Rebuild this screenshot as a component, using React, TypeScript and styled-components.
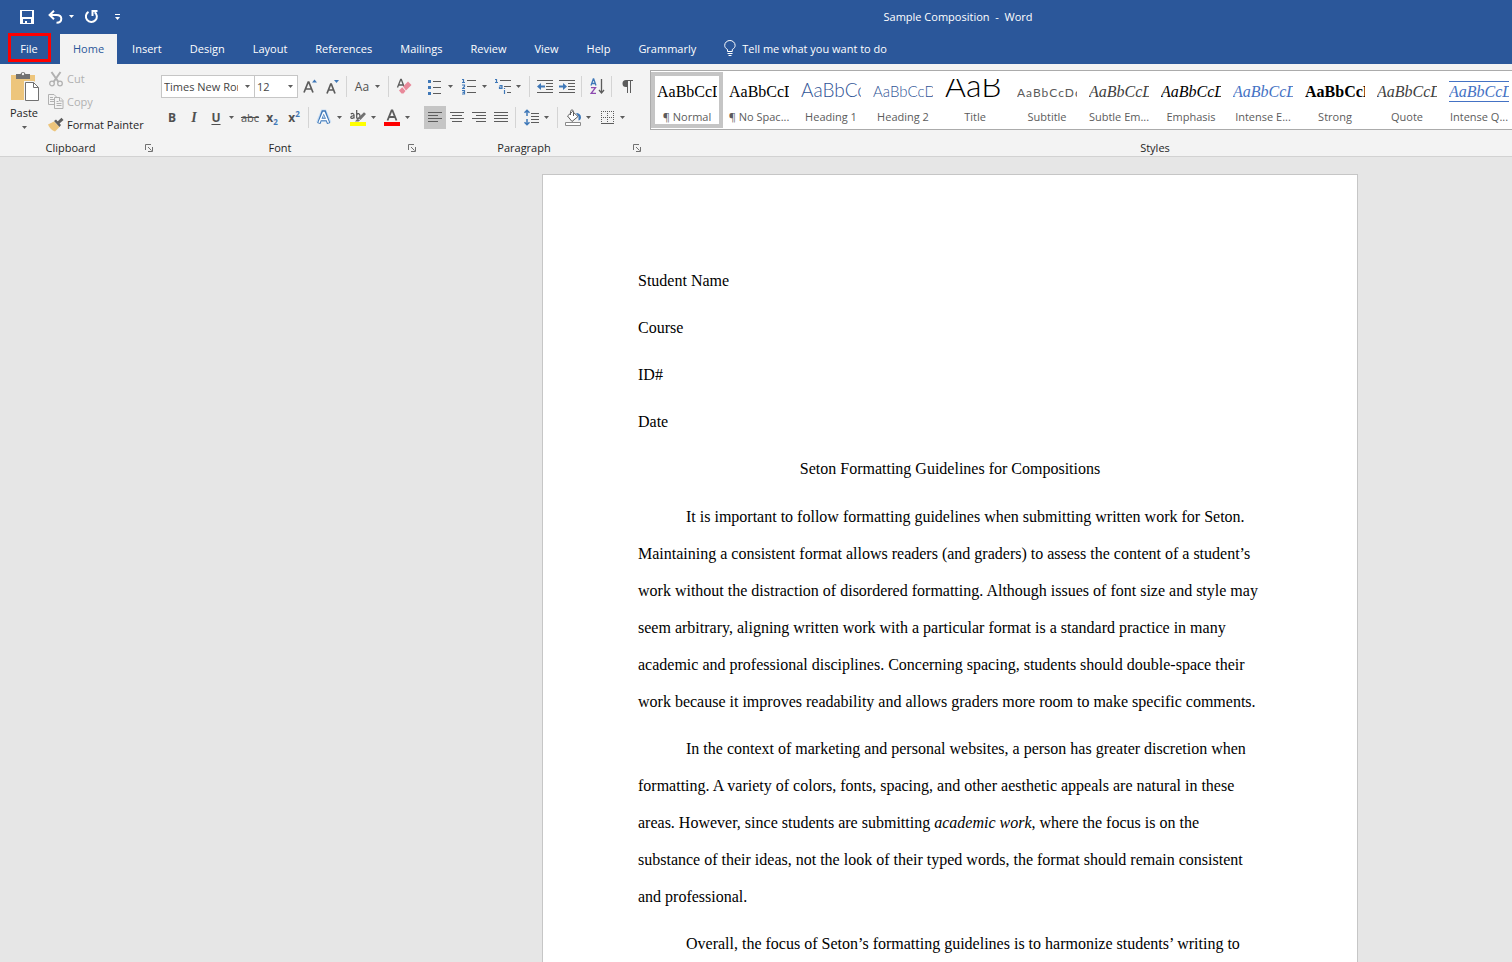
import React from "react";
import styled, { createGlobalStyle, css } from "styled-components";

const blue = "#2b579a";
const accent = "#3f78b8";
const ink = "#5c5c5c";

const GlobalStyle = createGlobalStyle`
  *, *::before, *::after { box-sizing: border-box; }
  body {
    margin: 0;
    font-family: "Open Sans", "Noto Sans", sans-serif;
    font-size: 11px;
    color: #262626;
  }
  button, select {
    font: inherit;
    color: inherit;
    border: 0;
    padding: 0;
    margin: 0;
    background: none;
  }
  svg { display: block; flex: none; }
`;

const Window = styled.div`
  display: flex;
  flex-direction: column;
  height: 100vh;
  overflow: hidden;
  background: #e6e6e6;
`;

const TitleBar = styled.header`
  display: flex;
  align-items: center;
  flex: none;
  height: 34px;
  padding-bottom: 1px;
  background: ${blue};
  color: #fff;
`;

const QuickAccess = styled.div`
  display: flex;
  align-items: center;
  gap: 6px;
  width: 130px;
  padding-left: 20px;
`;

const QuickButton = styled.button<{ $width?: number }>`
  display: flex;
  align-items: center;
  justify-content: center;
  width: ${(p) => p.$width ?? 16}px;
  height: 18px;
`;

const UndoGroup = styled.div`
  display: flex;
  align-items: center;
  margin-left: 6px;
`;

const WindowTitle = styled.h1`
  flex: 1;
  margin: 0;
  padding: 0 0 1px 274px;
  text-align: center;
  font-size: 11px;
  font-weight: 400;
  white-space: pre;
`;

const TabBar = styled.nav`
  display: flex;
  flex: none;
  gap: 2px;
  height: 30px;
  background: ${blue};
`;

const Tab = styled.button<{ $active?: boolean }>`
  padding: 0 13px 2px;
  white-space: nowrap;
  color: ${(p) => (p.$active ? blue : "#fff")};
  background: ${(p) => (p.$active ? "#f3f3f3" : "transparent")};
`;

const FileTab = styled(Tab)`
  position: relative;
  width: 58px;
  &::after {
    content: "";
    position: absolute;
    left: 8px;
    right: 7px;
    top: -1px;
    bottom: 2px;
    border: 3px solid #fe0000;
  }
`;

const TellMe = styled(Tab)`
  display: flex;
  align-items: center;
  gap: 6px;
`;

const Ribbon = styled.section`
  display: flex;
  flex: none;
  height: 93px;
  background: #f3f3f3;
  border-bottom: 1px solid #d2d2d2;
`;

const Group = styled.div<{ $width?: number }>`
  position: relative;
  display: flex;
  flex-direction: column;
  justify-content: space-between;
  ${(p) =>
    p.$width
      ? css`
          flex: none;
          width: ${p.$width}px;
        `
      : css`
          flex: 1;
          min-width: 0;
        `}
  & + &::before {
    content: "";
    position: absolute;
    left: 0;
    top: 4px;
    bottom: 4px;
    width: 1px;
    background: #d4d4d4;
  }
`;

const GroupFooter = styled.div<{ $shift?: number }>`
  display: flex;
  align-items: center;
  height: 17px;
  padding: 0 3px 0 ${(p) => p.$shift ?? 0}px;
`;

const GroupName = styled.span`
  flex: 1;
  margin-right: 4px;
  text-align: center;
`;

const ClipboardBody = styled.div`
  display: flex;
  padding: 3px 0 0 4px;
`;

const PasteButton = styled.button`
  display: flex;
  flex-direction: column;
  align-items: center;
  width: 40px;
  padding-top: 4px;
`;

const PasteLabel = styled.span`
  margin: 2px 0 5px;
  line-height: 17px;
`;

const CommandList = styled.div`
  display: flex;
  flex-direction: column;
  padding-left: 4px;
`;

const Command = styled.button`
  display: flex;
  align-items: center;
  gap: 3px;
  height: 23px;
  white-space: nowrap;
  &:disabled { color: #b1b1b1; }
`;

const ToolRows = styled.div`
  display: flex;
  flex-direction: column;
  gap: 8px;
  padding: 11px 0 0 5px;
`;

const ToolRow = styled.div`
  display: flex;
  height: 23px;
`;

const Tool = styled.button<{ $on?: boolean }>`
  display: flex;
  align-items: center;
  justify-content: center;
  flex: none;
  width: 22px;
  color: #505050;
  background: ${(p) => (p.$on ? "#c5c5c5" : "transparent")};
`;

const Glyph = styled.span<{ $look?: "bold" | "italic" | "underline" | "strike" }>`
  font-size: 12px;
  line-height: 16px;
  font-weight: ${(p) => (p.$look === "strike" ? 400 : 700)};
  ${(p) => p.$look === "italic" && css`font-family: "Liberation Serif", serif; font-size: 14px; font-style: italic;`}
  ${(p) => p.$look === "underline" && css`text-decoration: underline; text-underline-offset: 2px;`}
  ${(p) => p.$look === "strike" && css`font-size: 11px; text-decoration: line-through;`}
`;

const ScriptMark = styled.span<{ $raised?: boolean }>`
  align-self: ${(p) => (p.$raised ? "flex-start" : "flex-end")};
  margin: 3px 0 2px;
  font-size: 8px;
  line-height: 10px;
  font-weight: 700;
  color: ${accent};
`;

const CaseLabel = styled.span`
  font-size: 12px;
`;

const DropButton = styled.button`
  display: flex;
  align-items: center;
  flex: none;
  width: 12px;
  padding-left: 2px;
`;

const Divider = styled.span`
  flex: none;
  width: 1px;
  margin: 1px 4px 1px 3px;
  background: #d4d4d4;
`;

const Combo = styled.label<{ $width: number }>`
  position: relative;
  display: flex;
  flex: none;
  width: ${(p) => p.$width}px;
  & + & {
    margin: 0 1px 0 -1px;
  }
  svg {
    position: absolute;
    right: 5px;
    top: 10px;
    pointer-events: none;
  }
`;

const ComboSelect = styled.select`
  appearance: none;
  width: 100%;
  padding: 0 16px 0 2px;
  border: 1px solid #c6c6c6;
  border-radius: 0;
  background: #fff;
  color: #444;
`;

const Gallery = styled.div`
  display: flex;
  height: 60px;
  margin: 6px 0 0 6px;
  padding: 1px 0;
  border: 1px solid #ababab;
  border-right: 0;
  background: #fff;
  overflow: hidden;
`;

const StyleCell = styled.button<{ $selected?: boolean }>`
  display: flex;
  flex-direction: column;
  align-items: center;
  flex: none;
  width: 72px;
  border: 4px solid ${(p) => (p.$selected ? "#c5c5c5" : "transparent")};
  color: #5c5c5c;
`;

type Look = {
  font?: "serif" | "light";
  size?: number;
  color?: string;
  italic?: boolean;
  bold?: boolean;
  regular?: boolean;
  spaced?: boolean;
  ruled?: boolean;
};

const weightOf = (look: Look) => {
  if (look.bold) return 700;
  return look.font === "light" && !look.regular ? 300 : 400;
};

/* The empty ::before block sets one shared baseline for samples of every size. */
const Preview = styled.span<{ $look: Look }>`
  display: flex;
  align-items: baseline;
  width: 60px;
  height: 22px;
  margin: 3px 0 9px;
  overflow: hidden;
  white-space: nowrap;
  line-height: 0;
  font-family: ${(p) => (p.$look.font === "light" ? `Lato, sans-serif` : `"Liberation Serif", serif`)};
  font-weight: ${(p) => weightOf(p.$look)};
  font-size: ${(p) => p.$look.size ?? 16}px;
  font-style: ${(p) => (p.$look.italic ? "italic" : "normal")};
  color: ${(p) => p.$look.color ?? "#000"};
  letter-spacing: ${(p) => (p.$look.spaced ? "1px" : "normal")};
  &::before {
    content: "";
    height: 18px;
  }
  ${(p) =>
    p.$look.ruled &&
    css`
      height: 21px;
      margin: 5px 0 8px;
      border-top: 1px solid #4472c4;
      border-bottom: 1px solid #4472c4;
      &::before { height: 15px; }
    `}
`;

const StyleName = styled.span`
  line-height: 14px;
  white-space: nowrap;
`;

const Workspace = styled.main`
  flex: 1;
  min-height: 0;
  overflow: hidden;
  padding: 17px 154px 0 0;
`;

const Sheet = styled.article`
  width: 816px;
  min-height: 1056px;
  margin-left: auto;
  padding: 87px 95px;
  border: 1px solid #c6c6c6;
  background: #fff;
  color: #000;
  font-family: "Liberation Serif", serif;
  font-size: 16px;
  line-height: 37px;
`;

const HeadLine = styled.p`
  margin: 0 0 10px;
`;

const DocTitle = styled.h2`
  margin: 0 0 11px;
  text-align: center;
  font-size: 16px;
  font-weight: 400;
`;

const Paragraph = styled.p`
  margin: 0 0 10px;
  text-indent: 48px;
`;

const Arrow = ({ color = "#5c5c5c" }: { color?: string }) => (
  <svg width="5" height="3" viewBox="0 0 5 3">
    <path d="M0 0h5L2.5 3z" fill={color} />
  </svg>
);

const Drop = ({ label }: { label: string }) => (
  <DropButton aria-label={label}>
    <Arrow />
  </DropButton>
);

const SaveIcon = () => (
  <svg width="14" height="14" viewBox="0 0 14 14">
    <path d="M0 0h14v14H0zM2 1v6h10V1zM3 9v4h2v-2h2v2h4V9z" fill="#fff" fillRule="evenodd" />
  </svg>
);

const UndoIcon = () => (
  <svg width="15" height="14" viewBox="0 0 15 14" fill="none" stroke="#fff" strokeWidth="2">
    <path d="M6 .8 1.6 5 6 9.2M2 5h6.5c3 0 4.800 1.500 4.800 3.800S11.500 12.800 8.500 12.800" />
  </svg>
);

const RedoIcon = () => (
  <svg width="15" height="15" viewBox="0 0 15 15" fill="none" stroke="#fff" strokeWidth="2">
    <path d="M4.500 2.800a5.500 5.500 0 1 0 6.200.3" />
    <path d="M8.500 7V2h5" />
  </svg>
);

const CustomizeIcon = () => (
  <svg width="5" height="6" viewBox="0 0 5 6" fill="#fff">
    <path d="M0 0h5v1H0zM0 3h5L2.500 6z" />
  </svg>
);

const BulbIcon = () => (
  <svg width="12" height="16" viewBox="0 0 12 16" fill="none" stroke="#fff">
    <path d="M3.500 11.500v-2C1.500 8.300.7 7 .7 5.400a5.200 4.900 0 0 1 10.400 0c0 1.600-.8 2.900-2.800 4.100v2zM3.500 13.500h5M4.500 15.500h3" />
  </svg>
);

const PasteIcon = () => (
  <svg width="29" height="31" viewBox="0 0 29 31">
    <path d="M1 4h24v25H1z" fill="#edc57c" />
    <path d="M6 3h4.500a2.600 2.600 0 0 1 5 0H20v5H6z" fill="#717171" />
    <circle cx="13" cy="3" r="1.200" fill="#f3f3f3" />
    <path d="M14 10h10l5 5v16H14z" fill="#f3f3f3" />
    <path d="M15.500 11.500h8l5 5v13h-13z" fill="#fff" stroke="#717171" />
    <path d="M23.500 11.500v5h5" fill="none" stroke="#717171" />
  </svg>
);

const CutIcon = () => (
  <svg width="16" height="16" viewBox="0 0 16 16" fill="none" stroke="#b1b1b1">
    <path d="M3.500 1 10.500 11M12.500 1 5.500 11" strokeWidth="2" />
    <circle cx="4" cy="12.500" r="2.300" strokeWidth="1.300" />
    <circle cx="12" cy="12.500" r="2.300" strokeWidth="1.300" />
  </svg>
);

const CopyIcon = () => (
  <svg width="16" height="15" viewBox="0 0 16 15" fill="#f3f3f3" stroke="#b1b1b1">
    <path d="M.5.5H6L8.500 3v7.500h-8z" />
    <path d="M2 3.500h3M2 5.500h4M2 7.500h4" />
    <path d="M6.500 3.500h5.500l3 3v8H6.500z" />
    <path d="M11.500 3.500v3.500h3.500M8.500 7.500h2M8.500 9.500h5M8.500 11.500h5" />
  </svg>
);

const PainterIcon = () => (
  <svg width="16" height="15" viewBox="0 0 16 15">
    <path d="M0 7.500 6 4.500l5.500 5.500L7 14.500C4 13.500 1.500 11 0 7.500z" fill="#edc57c" />
    <path d="m6 4 2-1.500L13 8l-1.500 2zM9.500 4.500 13.500.800 15.500 3 11.500 6.500z" fill="#5f5f5f" />
  </svg>
);

const LauncherIcon = () => (
  <svg width="8" height="8" viewBox="0 0 8 8" fill="none" stroke="#717171">
    <path d="M.5 6V.5H6M3 3l3.500 3.500M7.500 3v4.500H3" />
  </svg>
);

const GrowIcon = ({ small }: { small?: boolean }) => (
  <svg width="16" height="17" viewBox="0 0 16 17">
    {small ? (
      <>
        <path d="M3 15.500 6.700 6h.6L11 15.500M4.500 12h5" fill="none" stroke={ink} strokeWidth="1.700" />
        <path d="M10 2h5l-2.500 3z" fill={accent} />
      </>
    ) : (
      <>
        <path d="M2 14.500 6.200 4h.6L11 14.500M3.500 11h6" fill="none" stroke={ink} strokeWidth="1.700" />
        <path d="M10 4.500h5L12.500 1.500z" fill={accent} />
      </>
    )}
  </svg>
);

const EraserIcon = () => (
  <svg width="16" height="17" viewBox="0 0 16 17">
    <path d="M1.500 9.500 4.700 1.500h.6L8 8.500M2.500 7h4.500" fill="none" stroke={ink} strokeWidth="1.300" />
    <path d="m7 8.500 5-5 3.500 3.500-5.500 5.500z" fill="#e8899a" />
    <path d="m6.200 9.300 3.300 3.800L7.500 15.500h-2L3 12.500z" fill="#e8899a" />
  </svg>
);

const OutlineAIcon = () => (
  <svg width="16" height="17" viewBox="0 0 16 17">
    <path d="M2.500 14 7 3h1.500L13 14M4.500 10.500h7" fill="none" stroke="#c9def4" strokeWidth="5" />
    <path d="M2.800 14.500 7 3h1.500L12.700 14.500M4.500 10.500h7" fill="none" stroke={accent} strokeWidth="3.400" />
    <path d="M3 13.800 7.400 3.500h.7L12.500 13.800M5 10.500h6" fill="none" stroke="#fff" strokeWidth="1.500" />
  </svg>
);

const HighlightIcon = () => (
  <svg width="17" height="17" viewBox="0 0 17 17">
    <path d="M.800 5.200C2 4 4 4.200 4 6v3.500M4 6.800C1.500 6.600.8 7.500.8 8.300 1 9.800 3.300 9.700 4 8.300M6.700 1v8.500M6.700 6C7.200 4 10 4.200 10 7c0 2.500-2.600 3-3.300 1.500" fill="none" stroke="#505050" strokeWidth="1.200" />
    <path d="M14 3.200 16 5l-5.500 6-2.500-2zM7.500 9.500 10 11.500 8.500 12.500H5z" fill="#717171" />
    <path d="M0 13h16v4H0z" fill="#ff0" />
  </svg>
);

const FontColorIcon = () => (
  <svg width="16" height="17" viewBox="0 0 16 17">
    <path d="M3.500 11.500 7.600 1.500h.8L12.500 11.500M5 8h6" fill="none" stroke={ink} strokeWidth="1.800" />
    <path d="M0 13h16v4H0z" fill="#fe0000" />
  </svg>
);

const BulletsIcon = () => (
  <svg width="14" height="16" viewBox="0 0 14 16">
    <path d="M0 1h3v3H0zM0 7h3v3H0zM0 13h3v3H0z" fill={accent} />
    <path d="M5 2h8v1H5zM5 8h8v1H5zM5 14h8v1H5z" fill={ink} />
  </svg>
);

const NumbersIcon = () => (
  <svg width="15" height="17" viewBox="0 0 15 17">
    <path d="M0 1.500h1.500V5M0 4.500h3M0 7h2.500v1.500L.5 10.500H3M0 12.500h2.500v3.500H0M.5 14.300h2" fill="none" stroke={accent} strokeWidth="1.200" />
    <path d="M5 2h9v1H5zM5 8h9v1H5zM5 14h9v1H5z" fill={ink} />
  </svg>
);

const MultilevelIcon = () => (
  <svg width="17" height="17" viewBox="0 0 17 17">
    <path d="M0 1.500h1.500V5M0 4.500h3M4.500 7.500H7v3H4.500V9H7M9.500 12v4M9.500 10v1" fill="none" stroke={accent} strokeWidth="1.200" />
    <path d="M5 2h11v1H5zM9 8h7v1H9zM12 14h4v1h-4z" fill={ink} />
  </svg>
);

const IndentIcon = ({ out }: { out?: boolean }) => (
  <svg width="16" height="13" viewBox="0 0 16 13">
    <path d="M0 0h16v1H0zM9 3h7v1H9zM9 6h7v1H9zM9 9h7v1H9zM0 12h16v1H0z" fill={ink} />
    <path
      d={out ? "M0 6.500 4 3v2.500h4v2H4V10z" : "M8 6.500 4 3v2.500H0v2h4V10z"}
      fill={accent}
    />
  </svg>
);

const SortIcon = () => (
  <svg width="15" height="17" viewBox="0 0 15 17" fill="none">
    <path d="M1 7.500 3.300 1h.4L6 7.500M1.800 5.500h3.400" stroke={accent} strokeWidth="1.300" />
    <path d="M1 9.700h4.500L1.200 15.300H6" stroke="#8e4bb0" strokeWidth="1.300" />
    <path d="M11.500 1v14M9 12l2.500 3 2.500-3" stroke={ink} strokeWidth="1.300" />
  </svg>
);

const PilcrowIcon = () => (
  <svg width="11" height="13" viewBox="0 0 11 13">
    <path d="M11 0H4a3.500 3.500 0 0 0 0 7h1v6h1V1h2v12h1V1h2z" fill={ink} />
  </svg>
);

type Align = "left" | "center" | "right" | "full";
const alignPaths: Record<Align, string> = {
  left: "M0 .5h14M0 3.500h10M0 6.500h14M0 9.500h10",
  center: "M0 .5h14M2 3.500h10M0 6.500h14M2 9.500h10",
  right: "M0 .5h14M4 3.500h10M0 6.500h14M4 9.500h10",
  full: "M0 .5h14M0 3.500h14M0 6.500h14M0 9.500h14",
};
const AlignIcon = ({ to }: { to: Align }) => (
  <svg width="14" height="11" viewBox="0 0 14 11">
    <path d={alignPaths[to]} stroke={ink} />
  </svg>
);

const SpacingIcon = () => (
  <svg width="15" height="17" viewBox="0 0 15 17" fill="none">
    <path d="M3 1v6M.5 3.700 3 1.200l2.500 2.500M3 10v6M.5 13.300 3 15.800l2.500-2.500" stroke={accent} strokeWidth="1.500" />
    <path d="M7 4.500h8M7 7.500h8M7 10.500h8M7 13.500h8" stroke={ink} />
  </svg>
);

const ShadingIcon = () => (
  <svg width="17" height="17" viewBox="0 0 17 17">
    <path d="m2.500 7 5-4.500 5.500 5-6 5z" fill="#fff" stroke={ink} />
    <path d="M5.500 6V2.500c0-2 3-2 3 0V7" fill="none" stroke={ink} />
    <path d="M11 4c3 0 5 1.500 5 4.500 0 2-1.500 3-2.500 3V7.500z" fill={accent} />
    <path d="M.5 13.500h15v3H.5z" fill="#fff" stroke="#8a8a8a" />
  </svg>
);

const BordersIcon = () => (
  <svg width="13" height="13" viewBox="0 0 13 13" fill="none" stroke={ink}>
    <path d="M0 .5h13M0 6.500h13M.5 0v12M6.500 0v12M12.500 0v12" strokeDasharray="1 1" />
    <path d="M0 12.500h13" />
  </svg>
);

const tabs = ["Insert", "Design", "Layout", "References", "Mailings", "Review", "View", "Help", "Grammarly"];

const styles: { name: string; look: Look; sample?: string }[] = [
  { name: "¶ Normal", look: {} },
  { name: "¶ No Spac...", look: {} },
  { name: "Heading 1", look: { font: "light", size: 19, color: "#2f5496" } },
  { name: "Heading 2", look: { font: "light", size: 15, color: "#2f5496" } },
  { name: "Title", look: { font: "light", size: 32 }, sample: "AaB" },
  { name: "Subtitle", look: { font: "light", regular: true, size: 12, color: "#5a5a5a", spaced: true } },
  { name: "Subtle Em...", look: { italic: true, color: "#404040" } },
  { name: "Emphasis", look: { italic: true } },
  { name: "Intense E...", look: { italic: true, color: "#4472c4" } },
  { name: "Strong", look: { bold: true } },
  { name: "Quote", look: { italic: true, color: "#404040" } },
  { name: "Intense Q...", look: { italic: true, color: "#4472c4", ruled: true } },
];

const Footer = ({ name, launcher = true, shift }: { name: string; launcher?: boolean; shift?: number }) => (
  <GroupFooter $shift={shift}>
    <GroupName>{name}</GroupName>
    {launcher && (
      <button aria-label={`${name} settings`}>
        <LauncherIcon />
      </button>
    )}
  </GroupFooter>
);

export default function App() {
  return (
    <Window>
      <GlobalStyle />
      <TitleBar>
        <QuickAccess>
          <QuickButton aria-label="Save"><SaveIcon /></QuickButton>
          <UndoGroup>
            <QuickButton aria-label="Undo" $width={18}><UndoIcon /></QuickButton>
            <QuickButton aria-label="Undo history" $width={14}><Arrow color="#fff" /></QuickButton>
          </UndoGroup>
          <QuickButton aria-label="Redo" $width={16}><RedoIcon /></QuickButton>
          <QuickButton aria-label="Customize toolbar" $width={30}><CustomizeIcon /></QuickButton>
        </QuickAccess>
        <WindowTitle>{"Sample Composition  -  Word"}</WindowTitle>
      </TitleBar>

      <TabBar>
        <FileTab>File</FileTab>
        <Tab $active>Home</Tab>
        {tabs.map((t) => (
          <Tab key={t}>{t}</Tab>
        ))}
        <TellMe>
          <BulbIcon />
          Tell me what you want to do
        </TellMe>
      </TabBar>

      <Ribbon>
        <Group $width={156}>
          <ClipboardBody>
            <PasteButton>
              <PasteIcon />
              <PasteLabel>Paste</PasteLabel>
              <Arrow />
            </PasteButton>
            <CommandList>
              <Command disabled><CutIcon />Cut</Command>
              <Command disabled><CopyIcon />Copy</Command>
              <Command><PainterIcon />Format Painter</Command>
            </CommandList>
          </ClipboardBody>
          <Footer name="Clipboard" />
        </Group>

        <Group $width={263}>
          <ToolRows>
            <ToolRow>
              <Combo $width={94}>
                <ComboSelect aria-label="Font"><option>Times New Roman</option></ComboSelect>
                <Arrow />
              </Combo>
              <Combo $width={44}>
                <ComboSelect aria-label="Font size"><option>12</option></ComboSelect>
                <Arrow />
              </Combo>
              <Tool aria-label="Increase font size"><GrowIcon /></Tool>
              <Tool aria-label="Decrease font size"><GrowIcon small /></Tool>
              <Divider />
              <Tool aria-label="Change case"><CaseLabel>Aa</CaseLabel></Tool>
              <Drop label="Change case options" />
              <Divider />
              <Tool aria-label="Clear formatting"><EraserIcon /></Tool>
            </ToolRow>
            <ToolRow>
              <Tool aria-label="Bold"><Glyph>B</Glyph></Tool>
              <Tool aria-label="Italic"><Glyph $look="italic">I</Glyph></Tool>
              <Tool aria-label="Underline"><Glyph $look="underline">U</Glyph></Tool>
              <Drop label="Underline options" />
              <Tool aria-label="Strikethrough"><Glyph $look="strike">abc</Glyph></Tool>
              <Tool aria-label="Subscript"><Glyph>x</Glyph><ScriptMark>2</ScriptMark></Tool>
              <Tool aria-label="Superscript"><Glyph>x</Glyph><ScriptMark $raised>2</ScriptMark></Tool>
              <Divider />
              <Tool aria-label="Text effects"><OutlineAIcon /></Tool>
              <Drop label="Text effects options" />
              <Tool aria-label="Highlight"><HighlightIcon /></Tool>
              <Drop label="Highlight options" />
              <Tool aria-label="Font color"><FontColorIcon /></Tool>
              <Drop label="Font color options" />
            </ToolRow>
          </ToolRows>
          <Footer name="Font" />
        </Group>

        <Group $width={225}>
          <ToolRows>
            <ToolRow>
              <Tool aria-label="Bullets"><BulletsIcon /></Tool>
              <Drop label="Bullet options" />
              <Tool aria-label="Numbering"><NumbersIcon /></Tool>
              <Drop label="Numbering options" />
              <Tool aria-label="Multilevel list"><MultilevelIcon /></Tool>
              <Drop label="Multilevel options" />
              <Divider />
              <Tool aria-label="Decrease indent"><IndentIcon out /></Tool>
              <Tool aria-label="Increase indent"><IndentIcon /></Tool>
              <Divider />
              <Tool aria-label="Sort"><SortIcon /></Tool>
              <Divider />
              <Tool aria-label="Show marks"><PilcrowIcon /></Tool>
            </ToolRow>
            <ToolRow>
              <Tool aria-label="Align left" $on><AlignIcon to="left" /></Tool>
              <Tool aria-label="Center"><AlignIcon to="center" /></Tool>
              <Tool aria-label="Align right"><AlignIcon to="right" /></Tool>
              <Tool aria-label="Justify"><AlignIcon to="full" /></Tool>
              <Divider />
              <Tool aria-label="Line spacing"><SpacingIcon /></Tool>
              <Drop label="Line spacing options" />
              <Divider />
              <Tool aria-label="Shading"><ShadingIcon /></Tool>
              <Drop label="Shading options" />
              <Tool aria-label="Borders"><BordersIcon /></Tool>
              <Drop label="Border options" />
            </ToolRow>
          </ToolRows>
          <Footer name="Paragraph" />
        </Group>

        <Group>
          <Gallery>
            {styles.map((s, i) => (
              <StyleCell key={s.name} $selected={i === 0}>
                <Preview $look={s.look}>{s.sample ?? "AaBbCcDd"}</Preview>
                <StyleName>{s.name}</StyleName>
              </StyleCell>
            ))}
          </Gallery>
          <Footer name="Styles" launcher={false} shift={161} />
        </Group>
      </Ribbon>

      <Workspace>
        <Sheet>
          <HeadLine>Student Name</HeadLine>
          <HeadLine>Course</HeadLine>
          <HeadLine>ID#</HeadLine>
          <HeadLine>Date</HeadLine>
          <DocTitle>Seton Formatting Guidelines for Compositions</DocTitle>
          <Paragraph>
            It is important to follow formatting guidelines when submitting written work for Seton.
            Maintaining a consistent format allows readers (and graders) to assess the content of a
            student’s work without the distraction of disordered formatting. Although issues of font
            size and style may seem arbitrary, aligning written work with a particular format is a
            standard practice in many academic and professional disciplines. Concerning spacing,
            students should double-space their work because it improves readability and allows
            graders more room to make specific comments.
          </Paragraph>
          <Paragraph>
            In the context of marketing and personal websites, a person has greater discretion when
            formatting. A variety of colors, fonts, spacing, and other aesthetic appeals are natural
            in these areas. However, since students are submitting <em>academic work</em>, where the
            focus is on the substance of their ideas, not the look of their typed words, the format
            should remain consistent and professional.
          </Paragraph>
          <Paragraph>
            Overall, the focus of Seton’s formatting guidelines is to harmonize students’ writing to
          </Paragraph>
        </Sheet>
      </Workspace>
    </Window>
  );
}
